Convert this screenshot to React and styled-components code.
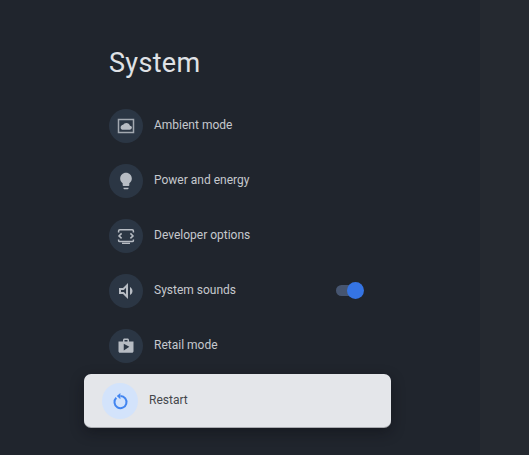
import styled, { createGlobalStyle } from 'styled-components';

const GlobalStyle = createGlobalStyle`
  html, body {
    margin: 0;
    padding: 0;
    background: #252930;
  }
  body {
    font-family: Roboto, "Liberation Sans", sans-serif;
  }
`;

const Screen = styled.div`
  width: 529px;
  height: 455px;
  display: flex;
  overflow: hidden;
  background: #252930;
`;

const Panel = styled.main`
  width: 480px;
  height: 455px;
  background: #20252d;
  padding: 47px 0 0 109px;
  box-sizing: border-box;
`;

const Title = styled.h1`
  margin: 0 0 18px;
  height: 33px;
  font-size: 27px;
  line-height: 33px;
  font-weight: 400;
  letter-spacing: 0.3px;
  color: #dfe1e5;
`;

const List = styled.ul`
  list-style: none;
  margin: 0;
  padding: 0;
`;

const Row = styled.li`
  display: flex;
  align-items: center;
  gap: 11px;
  box-sizing: border-box;
  height: ${(p) => (p.$focused ? '53px' : '55px')};
  width: ${(p) => (p.$focused ? '307px' : '255px')};
  margin: ${(p) => (p.$focused ? '1px 0 0 -25px' : '0')};
  padding-left: ${(p) => (p.$focused ? '18px' : '0')};
  border-radius: ${(p) => (p.$focused ? '7px' : '0')};
  background: ${(p) => (p.$focused ? '#e4e6ea' : 'transparent')};
  box-shadow: ${(p) => (p.$focused ? '0 1px 0 #a9abb0, 0 5px 14px rgba(10, 12, 18, 0.45)' : 'none')};
`;

const IconCircle = styled.span`
  flex: none;
  display: flex;
  align-items: center;
  justify-content: center;
  width: ${(p) => (p.$focused ? '36px' : '34px')};
  height: ${(p) => (p.$focused ? '36px' : '34px')};
  border-radius: 50%;
  background: ${(p) => (p.$focused ? '#d3e3fb' : '#2b3644')};
  color: ${(p) => (p.$focused ? '#4285f0' : '#b7bcc3')};
`;

const Label = styled.span`
  flex: 1;
  font-size: 12px;
  margin-top: -2px;
  color: ${(p) => (p.$focused ? '#44474c' : '#c6c9ce')};
`;

const Switch = styled.span`
  position: relative;
  flex: none;
  width: 24px;
  height: 11px;
  margin-right: 4px;
  border-radius: 6px;
  background: #465570;
`;

const Thumb = styled.span`
  position: absolute;
  top: -3px;
  right: -4px;
  width: 17px;
  height: 17px;
  border-radius: 50%;
  background: #3574e3;
`;

const Glyph = styled.svg`
  display: block;
  width: ${(p) => p.$size || 20}px;
  height: ${(p) => p.$size || 20}px;
`;

const AmbientIcon = () => (
  <Glyph viewBox="0 0 20 20">
    <rect x="2.500" y="3.500" width="15" height="13" fill="none" stroke="currentColor" strokeWidth="1.500" opacity="0.85" />
    <path
      fill="currentColor"
      d="M14 9.700C13.700 8 12.100 6.900 10.300 6.900c-1.400 0-2.600.8-3.200 1.900C5.600 9 4.600 10.100 4.600 11.400c0 1.400 1.100 2.400 2.500 2.400h6.500c1.300 0 2.300-1 2.300-2.200 0-1-.8-1.800-1.900-1.900z"
    />
  </Glyph>
);

const BulbIcon = () => (
  <Glyph viewBox="0 0 24 24">
    <path
      fill="currentColor"
      d="M9 21c0 .55.45 1 1 1h4c.55 0 1-.45 1-1v-1H9v1zm3-19C8.140 2 5 5.140 5 9c0 2.380 1.190 4.470 3 5.740V17c0 .55.45 1 1 1h6c.55 0 1-.45 1-1v-2.260c1.810-1.270 3-3.360 3-5.740 0-3.860-3.140-7-7-7z"
    />
  </Glyph>
);

const DeveloperIcon = () => (
  <Glyph viewBox="0 0 20 20">
    <path
      fill="none"
      stroke="currentColor"
      strokeWidth="1.500"
      d="M2.600 6.400V4.900c0-.7.5-1.200 1.200-1.200h12.400c.7 0 1.200.5 1.200 1.200v1.500M2.600 13.400v1c0 .7.5 1.200 1.200 1.200h12.400c.7 0 1.200-.5 1.200-1.200v-1M5.600 7.400 3 9.900l2.600 2.500M14.400 7.400 17 9.900l-2.600 2.500"
    />
    <path fill="currentColor" d="M6 16.600h8v1.400H6z" />
  </Glyph>
);

const SoundIcon = () => (
  <Glyph viewBox="0 2 20 20">
    <path
      fill="currentColor"
      d="M3 9v6h4l5 5V4L7 9H3zm7-.17v6.340L7.830 13H5v-2h2.830L10 8.830zM16.500 12c0-1.770-1.020-3.290-2.500-4.030v8.050c1.480-.73 2.500-2.250 2.500-4.020z"
    />
  </Glyph>
);

const RetailIcon = () => (
  <Glyph $size={18} viewBox="0 0 24 24">
    <path
      fill="currentColor"
      d="M16 6V4c0-1.110-.89-2-2-2h-4c-1.110 0-2 .89-2 2v2H2v13c0 1.110.89 2 2 2h16c1.110 0 2-.89 2-2V6h-6zm-6-2h4v2h-4V4zM9 18V9l7.500 4L9 18z"
    />
  </Glyph>
);

const RestartIcon = () => (
  <Glyph viewBox="0 0 20 20">
    <path
      fill="none"
      stroke="currentColor"
      strokeWidth="2"
      d="M6.300 6.800a6 6 0 1 0 4.200-1.700"
    />
    <path fill="currentColor" d="M10.400 2v6.200L6.800 5.100z" />
  </Glyph>
);

const items = [
  { label: 'Ambient mode', icon: <AmbientIcon /> },
  { label: 'Power and energy', icon: <BulbIcon /> },
  { label: 'Developer options', icon: <DeveloperIcon /> },
  { label: 'System sounds', icon: <SoundIcon />, toggle: true },
  { label: 'Retail mode', icon: <RetailIcon /> },
  { label: 'Restart', icon: <RestartIcon />, focused: true },
];

function App() {
  return (
    <Screen>
      <GlobalStyle />
      <Panel>
        <Title>System</Title>
        <List>
          {items.map((item) => (
            <Row key={item.label} $focused={item.focused}>
              <IconCircle $focused={item.focused}>{item.icon}</IconCircle>
              <Label $focused={item.focused}>{item.label}</Label>
              {item.toggle && (
                <Switch>
                  <Thumb />
                </Switch>
              )}
            </Row>
          ))}
        </List>
      </Panel>
    </Screen>
  );
}

export default App;
